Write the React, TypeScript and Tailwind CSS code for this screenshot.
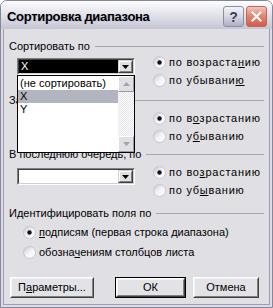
import React from "react";

function RadioIcon({ checked }: { checked?: boolean }) {
  return (
    <svg width="13" height="13" viewBox="0 0 13 13" className="shrink-0">
      <defs>
        <linearGradient id="rgrad" x1="0" y1="0" x2="1" y2="1">
          <stop offset="0" stopColor="#c4c4ce" />
          <stop offset="0.5" stopColor="#f4f4f7" />
          <stop offset="1" stopColor="#ffffff" />
        </linearGradient>
      </defs>
      <circle cx="6.5" cy="6.5" r="6" fill="url(#rgrad)" stroke="#c6c6d0" strokeWidth="1" />
      {checked && <circle cx="6.5" cy="6.5" r="2.2" fill="#111111" />}
    </svg>
  );
}

function RadioRow({
  checked,
  children,
  wide,
}: {
  checked?: boolean;
  children: React.ReactNode;
  wide?: boolean;
}) {
  return (
    <div className="flex items-center h-[13px] gap-[3px] whitespace-nowrap">
      <RadioIcon checked={checked} />
      <span className={wide ? "tracking-[0.75px]" : ""}>{children}</span>
    </div>
  );
}

function GroupLabel({ children }: { children: React.ReactNode }) {
  return (
    <div className="flex items-center h-[13px] shrink-0">
      <span className="whitespace-nowrap">{children}</span>
      <div className="flex-1 h-px bg-[#a7a6aa] ml-[5px]" />
    </div>
  );
}

function DropBtn() {
  return (
    <div className="w-[15px] h-full shrink-0 border border-t-[#d4d0c8] border-l-[#d4d0c8] border-b-[#404040] border-r-[#404040]">
      <div className="w-full h-full flex items-center justify-center bg-[#e0dfe3] border border-t-white border-l-white border-b-[#808080] border-r-[#808080]">
        <svg width="7" height="4" viewBox="0 0 7 4">
          <path d="M0 0H7L3.5 4Z" fill="#000" />
        </svg>
      </div>
    </div>
  );
}

function Combo({
  selected,
  value,
  children,
}: {
  selected?: boolean;
  value?: string;
  children?: React.ReactNode;
}) {
  return (
    <div className="relative w-[118px] h-[17px] border border-t-[#808080] border-l-[#808080] border-b-white border-r-white">
      <div className="w-full h-full flex border border-t-[#404040] border-l-[#404040] border-b-[#d4d0c8] border-r-[#d4d0c8] bg-white">
        <div className={`flex-1 flex items-center pl-[2px] ${selected ? "bg-black text-white" : ""}`}>{value}</div>
        <DropBtn />
      </div>
      {children}
    </div>
  );
}

function ScrollBtn({ up }: { up?: boolean }) {
  return (
    <div className="w-[16px] h-[16px] shrink-0 bg-[#e0dfe3] border border-t-white border-l-white border-b-[#9a9aa4] border-r-[#9a9aa4] flex items-center justify-center">
      <svg width="7" height="4" viewBox="0 0 7 4">
        <path d={up ? "M0 4H7L3.5 0Z" : "M0 0H7L3.5 4Z"} fill="#a3a3ab" />
      </svg>
    </div>
  );
}

function DropList() {
  return (
    <div className="absolute left-[-1px] top-[16px] w-[118px] h-[78px] border border-black bg-white flex z-10">
      <div className="flex-1 pt-[1px] flex flex-col text-black">
        <div className="h-[13px] flex items-center pl-[2px] whitespace-nowrap">(не сортировать)</div>
        <div className="h-[13px] flex items-center pl-[2px] bg-[#b2b4bf]">X</div>
        <div className="h-[13px] flex items-center pl-[2px]">Y</div>
      </div>
      <div className="w-[16px] h-full flex flex-col">
        <ScrollBtn up />
        <div className="flex-1 bg-[repeating-conic-gradient(#ffffff_0_25%,#e4e3e8_0_50%)] bg-[length:2px_2px]" />
        <ScrollBtn />
      </div>
    </div>
  );
}

function Btn({
  children,
  def,
  className,
}: {
  children: React.ReactNode;
  def?: boolean;
  className?: string;
}) {
  const inner = (
    <div className="w-full h-full border border-t-white border-l-white border-b-[#404040] border-r-[#404040]">
      <div className="w-full h-full flex items-center justify-center bg-[#e3e2e7] border border-t-[#f4f4f6] border-l-[#f4f4f6] border-b-[#808080] border-r-[#808080]">
        {children}
      </div>
    </div>
  );
  return (
    <div className={`h-[21px] shrink-0 ${def ? "border border-black" : ""} ${className ?? ""}`}>{inner}</div>
  );
}

export default function App() {
  return (
    <div className="w-[273px] h-[308px] flex flex-col rounded-t-[7px] border border-[#85859b] bg-[#dcdce6] overflow-hidden font-['Liberation_Sans',Arial,sans-serif] text-black">
      {/* Title bar */}
      <div className="h-[28px] shrink-0 flex items-center pl-[6px] pr-[5px] bg-[linear-gradient(to_bottom,#fefeff_0%,#ececf2_30%,#dadae4_65%,#c6c6d4_100%)]">
        <span className="text-[13px] font-bold leading-[15px] tracking-[-0.3px] mt-[2px] whitespace-nowrap [text-shadow:1px_1px_0_#c8c8d4]">
          Сортировка диапазона
        </span>
        <div className="ml-auto flex gap-[2px] mt-[3px]">
          <div className="w-[21px] h-[21px] rounded-[3px] border border-[#8c8ea8] bg-[linear-gradient(to_bottom,#f4f4f8_0%,#d6d7e2_50%,#aeb0c4_100%)] flex items-center justify-center">
            <span className="text-[14px] font-bold leading-none text-[#3a3d5c] mt-[1px]">?</span>
          </div>
          <div className="w-[21px] h-[21px] rounded-[3px] border border-[#b56a66] bg-[linear-gradient(to_bottom,#f6c3b8_0%,#e58675_45%,#d65a4a_100%)] flex items-center justify-center">
            <svg width="11" height="11" viewBox="0 0 11 11">
              <path d="M1.5 1.5L9.5 9.5M9.5 1.5L1.5 9.5" stroke="#ffffff" strokeWidth="2.2" strokeLinecap="square" />
            </svg>
          </div>
        </div>
      </div>

      {/* Body */}
      <div className="flex-1 mx-[2px] mb-[2px] border border-t-0 border-[#9e9eb3] bg-[#e0dfe3] pt-[11px] pl-[5px] pr-[5px] flex flex-col text-[11px] leading-[13px]">
        {/* Group 1 */}
        <GroupLabel>Сортировать по</GroupLabel>
        <div className="h-[41px] flex shrink-0">
          <div className="w-[144px] pl-[8px] pt-[5px] relative z-10">
            <Combo selected value="X">
              <DropList />
            </Combo>
          </div>
          <div className="flex flex-col pt-[3px] gap-[5px]">
            <RadioRow checked wide>
              по возраста<span className="underline">н</span>ию
            </RadioRow>
            <RadioRow wide>
              по убывани<span className="underline">ю</span>
            </RadioRow>
          </div>
        </div>

        {/* Group 2 */}
        <GroupLabel>Затем по</GroupLabel>
        <div className="h-[41px] flex shrink-0">
          <div className="w-[144px] pl-[8px] pt-[5px]">
            <Combo />
          </div>
          <div className="flex flex-col pt-[5px] gap-[5px]">
            <RadioRow checked wide>
              по в<span className="underline">о</span>зрастанию
            </RadioRow>
            <RadioRow wide>
              по у<span className="underline">б</span>ыванию
            </RadioRow>
          </div>
        </div>

        {/* Group 3 */}
        <GroupLabel>В последнюю очередь, по</GroupLabel>
        <div className="h-[46px] flex shrink-0">
          <div className="w-[144px] pl-[8px] pt-[7px]">
            <Combo />
          </div>
          <div className="flex flex-col pt-[5px] gap-[5px]">
            <RadioRow checked wide>
              по во<span className="underline">з</span>растанию
            </RadioRow>
            <RadioRow wide>
              по уб<span className="underline">ы</span>ванию
            </RadioRow>
          </div>
        </div>

        {/* Group 4 */}
        <GroupLabel>Идентифицировать поля по</GroupLabel>
        <div className="flex flex-col pl-[14px] pt-[6px] gap-[7px] shrink-0">
          <RadioRow checked>
            <span className="underline">п</span>одписям (первая строка диапазона)
          </RadioRow>
          <RadioRow>
            обозна<span className="underline">ч</span>ениям столбцов листа
          </RadioRow>
        </div>

        {/* Buttons */}
        <div className="flex mt-[18px] shrink-0">
          <Btn className="w-[84px] ml-[1px]">
            <span>
              П<span className="underline">а</span>раметры...
            </span>
          </Btn>
          <Btn def className="w-[71px] ml-[21px]">
            <span>ОК</span>
          </Btn>
          <Btn className="w-[66px] ml-[7px]">
            <span>Отмена</span>
          </Btn>
        </div>
      </div>
    </div>
  );
}
